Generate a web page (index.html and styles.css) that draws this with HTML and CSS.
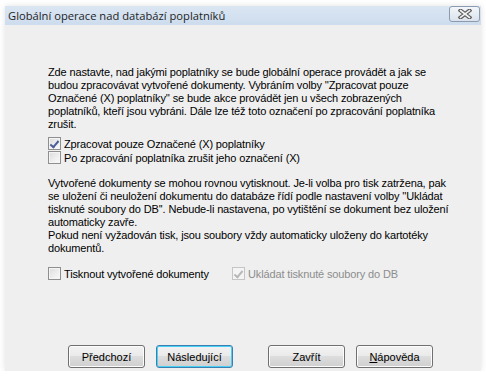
FILE: index.html
```
<!DOCTYPE html>
<html lang="cs">
<head>
    <meta charset="UTF-8">
    <title>Globální operace nad databází poplatníků</title>
    <link rel="stylesheet" href="styles.css">
</head>
<body>
    <div class="dialog">
        <div class="title_bar">
            <span class="title">Globální operace nad databází poplatníků</span>
            <a href="javascript:void(0)" class="close_btn">
                <svg width="14" height="10" viewBox="0 0 14 10">
                    <path d="M2.5 1.5 L11.5 8.5 M11.5 1.5 L2.5 8.5" stroke="#5a5a5a" stroke-width="4" stroke-linecap="square"/>
                    <path d="M2.5 1.5 L11.5 8.5 M11.5 1.5 L2.5 8.5" stroke="#f2f2f2" stroke-width="1.6" stroke-linecap="square" fill="none"/>
                </svg>
            </a>
        </div>
        <div class="dialog_body">
            <p class="desc">Zde nastavte, nad jakými poplatníky se bude globální operace provádět a jak se<br>budou zpracovávat vytvořené dokumenty. Vybráním volby ''Zpracovat pouze<br>Označené (X) poplatníky'' se bude akce provádět jen u všech zobrazených<br>poplatníků, kteří jsou vybráni. Dále lze též toto označení po zpracování poplatníka<br>zrušit.</p>
            <div class="check_list">
                <label class="check"><span class="box checked"></span>Zpracovat pouze Označené (X) poplatníky</label>
                <label class="check"><span class="box"></span>Po zpracování poplatníka zrušit jeho označení (X)</label>
            </div>
            <p class="desc second">Vytvořené dokumenty se mohou rovnou vytisknout. Je-li volba pro tisk zatržena, pak<br>se uložení či neuložení dokumentu do databáze řídí podle nastavení volby ''Ukládat<br>tisknuté soubory do DB''. Nebude-li nastavena, po vytištění se dokument bez uložení<br>automaticky zavře.<br>Pokud není vyžadován tisk, jsou soubory vždy automaticky uloženy do kartotéky<br>dokumentů.</p>
            <div class="check_row">
                <label class="check print"><span class="box"></span>Tisknout vytvořené dokumenty</label>
                <label class="check disabled"><span class="box checked"></span>Ukládat tisknuté soubory do DB</label>
            </div>
            <div class="btn_wrap">
                <button class="btn">Předchozí</button>
                <button class="btn default">Následující</button>
                <button class="btn close">Zavřít</button>
                <button class="btn"><u>N</u>ápověda</button>
            </div>
        </div>
    </div>
</body>
</html>
```
FILE: styles.css
```
* {margin: 0; padding: 0; box-sizing: border-box;}
body {background-color: #fff; font-family: "Liberation Sans", Arial, sans-serif; font-size: 11px; color: #000;}

.dialog {
    margin: 6px 0 0 5px;
    width: 476px;
    height: 365px;
    display: flex;
    flex-direction: column;
    background-color: #efefef;
    box-shadow: 0 0 6px rgba(0, 0, 0, 0.12);
}

.title_bar {
    height: 19px;
    display: flex;
    align-items: center;
    justify-content: space-between;
    padding: 0 1px 0 3px;
    background: linear-gradient(#dbe6f2, #cddcee);
}

.title {
    font-family: "Open Sans", "Noto Sans", sans-serif;
    font-size: 11.2px;
    color: #1e1e1e;
}

.close_btn {
    width: 31px;
    height: 16px;
    margin-top: -3px;
    display: flex;
    align-items: center;
    justify-content: center;
    border: 1px solid #8a9bb0;
    border-radius: 3px;
    background: linear-gradient(#f3f6fa, #dae2ec);
}

.dialog_body {
    flex: 1;
    padding: 41px 0 0 43px;
    display: flex;
    flex-direction: column;
    letter-spacing: -0.14px;
}

.desc {
    line-height: 13px;
}

.desc.second {
    margin-top: 13px;
}

.check_list {
    margin-top: 6px;
    display: flex;
    flex-direction: column;
    gap: 1px;
}

.check {
    display: flex;
    align-items: center;
    height: 13px;
    gap: 3px;
}

.box {
    width: 13px;
    height: 13px;
    border: 1px solid #8f8f8f;
    background: linear-gradient(135deg, #dcdcdc, #fbfbfb);
    box-shadow: inset 0 0 0 1px #f4f4f4;
    position: relative;
}

.box.checked::after {
    content: "";
    position: absolute;
    left: 3px;
    top: 1px;
    width: 3px;
    height: 7px;
    border: solid #4a5f97;
    border-width: 0 2px 2px 0;
    transform: rotate(40deg);
}

.check_row {
    margin-top: 12px;
    display: flex;
}

.check.print {
    width: 184px;
}

.check.disabled {
    color: #8d8d8d;
}

.check.disabled .box {
    border-color: #c5c5c5;
    background: #f4f4f4;
}

.check.disabled .box.checked::after {
    border-color: #b8b8b8;
}

.btn_wrap {
    margin: 65px 0 0 20px;
    display: flex;
}

.btn {
    width: 77px;
    height: 23px;
    margin-right: 11px;
    font-family: "Liberation Sans", Arial, sans-serif;
    font-size: 11px;
    color: #000;
    border: 1px solid #707070;
    border-radius: 3px;
    background: linear-gradient(#f2f2f2 0%, #ebebeb 45%, #dddddd 50%, #cfcfcf 100%);
    box-shadow: inset 0 0 0 1px #fcfcfc;
}

.btn.default {
    border-color: #3c7fb1;
    box-shadow: inset 0 0 0 1px #48d0f5;
}

.btn.close {
    margin-left: 24px;
}
```
